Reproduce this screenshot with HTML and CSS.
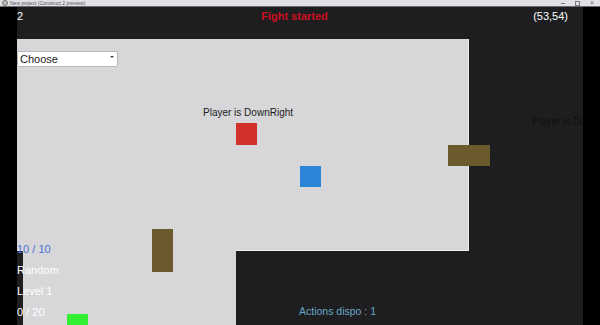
FILE: index.html
```html
<!DOCTYPE html>
<html lang="en">
<head>
    <meta charset="UTF-8">
    <meta name="viewport" content="width=device-width, initial-scale=1.0">
    <title>New project (Construct 2 preview)</title>
    <link rel="stylesheet" href="styles.css">
</head>
<body>

<div class="titlebar">
    <span class="app-icon"></span>
    <span class="title-text">New project (Construct 2 preview)</span>
    <div class="win-controls">
        <span class="ctl-min"></span>
        <span class="ctl-max"></span>
        <span class="ctl-close">&times;</span>
    </div>
</div>

<div class="screen">
    <div class="gutter"></div>

    <main class="game">
        <div class="floor floor-top"></div>
        <div class="floor floor-bottom"></div>

        <div class="hud-top">
            <span class="turn">2</span>
            <span class="fight">Fight started</span>
            <span class="coords">(53,54)</span>
        </div>

        <div class="select-wrap">
            <select class="choose">
                <option>Choose</option>
                <option>Attack</option>
                <option>Move</option>
            </select>
        </div>

        <p class="label label-main">Player is DownRight</p>
        <p class="label label-far">Player is DownRight</p>

        <div class="sprite player"></div>
        <div class="sprite enemy"></div>
        <div class="sprite crate crate-wide"></div>
        <div class="sprite crate crate-tall"></div>
        <div class="sprite goal"></div>

        <div class="stats">
            <span class="hp">10 / 10</span>
            <span>Random</span>
            <span>Level 1</span>
            <span>0 / 20</span>
        </div>

        <p class="actions">Actions dispo : 1</p>
    </main>

    <div class="gutter"></div>
</div>

</body>
</html>
```

FILE: styles.css
```css
body {
    margin: 0;
    padding: 0;
    width: 600px;
    height: 325px;
    overflow: hidden;
    background: #000;
    font-family: "Liberation Sans", Arial, sans-serif;
}

/* window title bar */
.titlebar {
    display: flex;
    align-items: center;
    height: 6px;
    background: #e1e1e5;
    border-bottom: 1px solid #6c6c70;
    padding-left: 2px;
}
.app-icon {
    width: 4px;
    height: 4px;
    border-radius: 50%;
    border: 1px solid #777;
    background: #bbb;
    margin-right: 2px;
}
.title-text {
    font-size: 5px;
    color: #555;
    line-height: 6px;
}
.win-controls {
    margin-left: auto;
    display: flex;
    align-items: center;
    gap: 10px;
    padding-right: 6px;
}
.ctl-min {
    width: 4px;
    height: 1px;
    background: #777;
}
.ctl-max {
    width: 3px;
    height: 3px;
    border: 1px solid #777;
}
.ctl-close {
    font-size: 7px;
    line-height: 6px;
    color: #666;
}

/* game frame */
.screen {
    display: flex;
    height: 318px;
}
.gutter {
    width: 17px;
    background: #000;
}
.game {
    position: relative;
    width: 566px;
    overflow: hidden;
    background: #1e1e20;
}

.floor {
    position: absolute;
    background: #d7d6d8;
}
.floor-top {
    left: 0;
    top: 32px;
    width: 451px;
    height: 211px;
    border-right: 1px solid #eeeeef;
    border-bottom: 1px solid #eeeeef;
}
.floor-bottom {
    left: 6px;
    top: 243px;
    width: 213px;
    height: 80px;
}

.hud-top {
    display: grid;
    grid-template-columns: 1fr auto 1fr;
    padding: 3px 15px 0 0;
    font-size: 11px;
    line-height: 13px;
    color: #fff;
}
.fight {
    color: #cc1020;
    font-weight: bold;
    margin-left: 4px;
}
.coords {
    text-align: right;
}

.select-wrap {
    position: absolute;
    left: 0;
    top: 42px;
}
.select-wrap::after {
    content: "";
    position: absolute;
    right: 4px;
    top: 7px;
    border-left: 2px solid transparent;
    border-right: 2px solid transparent;
    border-top: 2px solid #444;
}
.choose {
    appearance: none;
    -webkit-appearance: none;
    width: 101px;
    height: 16px;
    margin: 0;
    padding: 0 0 0 2px;
    border: 1px solid #b8b8b8;
    border-radius: 2px;
    background: #fff;
    font-family: "Liberation Sans", Arial, sans-serif;
    font-size: 11px;
    color: #222;
}

.label {
    position: absolute;
    margin: 0;
    font-size: 10px;
    line-height: 10px;
    white-space: nowrap;
}
.label-main {
    left: 186px;
    top: 101px;
    color: #1c1c1c;
}
.label-far {
    left: 515px;
    top: 110px;
    color: #0e0e0e;
}

.sprite {
    position: absolute;
}
.player {
    left: 219px;
    top: 116px;
    width: 21px;
    height: 22px;
    background: #d2302a;
}
.enemy {
    left: 283px;
    top: 159px;
    width: 21px;
    height: 21px;
    background: #2b86d9;
}
.crate {
    background: #6a5a2c;
}
.crate-wide {
    left: 431px;
    top: 138px;
    width: 42px;
    height: 21px;
}
.crate-tall {
    left: 135px;
    top: 222px;
    width: 21px;
    height: 43px;
}
.goal {
    left: 50px;
    top: 307px;
    width: 21px;
    height: 14px;
    background: #33ee33;
}

.stats {
    position: absolute;
    left: 0;
    top: 232px;
    display: flex;
    flex-direction: column;
    font-size: 11px;
    line-height: 21px;
    color: #fff;
}
.hp {
    color: #4a72d8;
}

.actions {
    position: absolute;
    left: 282px;
    top: 298px;
    margin: 0;
    font-size: 10.5px;
    line-height: 13px;
    color: #6aa6c6;
}
```
